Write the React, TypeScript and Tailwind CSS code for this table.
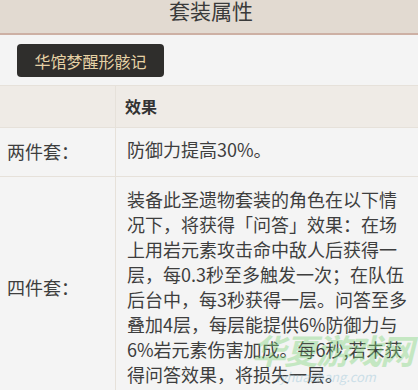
import React from "react";

const font = { fontFamily: '"Noto Sans CJK SC", "Noto Sans", sans-serif' };

export default function App() {
  return (
    <div
      className="relative w-[418px] h-[390px] overflow-hidden bg-[#f4f4f4] text-[#3e3e3e]"
      style={font}
    >
      <div className="h-[35px] bg-[#e2dad1] border-b-2 border-[#cdb0a4] flex justify-center">
        <span className="text-[21px] leading-[20px] text-[#3a3a3a] pl-[4px]">套装属性</span>
      </div>
      <div className="pt-[9px] pl-[17px]">
        <div className="w-[147px] h-[33px] rounded-[4px] bg-[#2f2e2c] flex items-center justify-center text-[16px] text-[#e6d2a6]">
          华馆梦醒形骸记
        </div>
      </div>
      <div className="mt-[8px] border-t border-[#e6e1da]">
        <div className="grid grid-cols-[116px_1fr] h-[42px] bg-[#efebe6] border-b border-[#e6e1da]">
          <div className="border-r border-[#e6e1da]" />
          <div className="flex items-center pl-[9px] pb-[2px] text-[16px] font-bold text-[#333]">效果</div>
        </div>
        <div className="grid grid-cols-[116px_1fr] border-b border-[#e6e1da]">
          <div className="border-r border-[#e6e1da] flex items-center pl-[7px] text-[18px] pb-[1px]">两件套：</div>
          <div className="pl-[11px] pt-[9px] pb-[14px] text-[18px] leading-[25px]">防御力提高30%。</div>
        </div>
        <div className="grid grid-cols-[116px_1fr] border-b border-[#e6e1da]">
          <div className="border-r border-[#e6e1da] flex items-center pl-[7px] text-[18px]">四件套：</div>
          <div className="pl-[11px] pr-[6px] pt-[10px] pb-[10px] text-[18px] leading-[25px]">
            装备此圣遗物套装的角色在以下情况下，将获得「问答」效果：在场上用岩元素攻击命中敌人后获得一层，每0.3秒至多触发一次；在队伍后台中，每3秒获得一层。问答至多叠加4层，每层能提供6%防御力与6%岩元素伤害加成。每6秒,若未获得问答效果，将损失一层。
          </div>
        </div>
      </div>
      <div className="absolute left-[252px] top-[330px] w-[160px] pointer-events-none opacity-40">
        <div className="text-[34px] leading-[40px] font-bold italic text-[#7fd67a] tracking-[-2px]">华夏游戏网</div>
        <div className="text-[13px] leading-[14px] italic text-[#8fbfd6] pl-[24px]">lyhuazhang.com</div>
      </div>
    </div>
  );
}
